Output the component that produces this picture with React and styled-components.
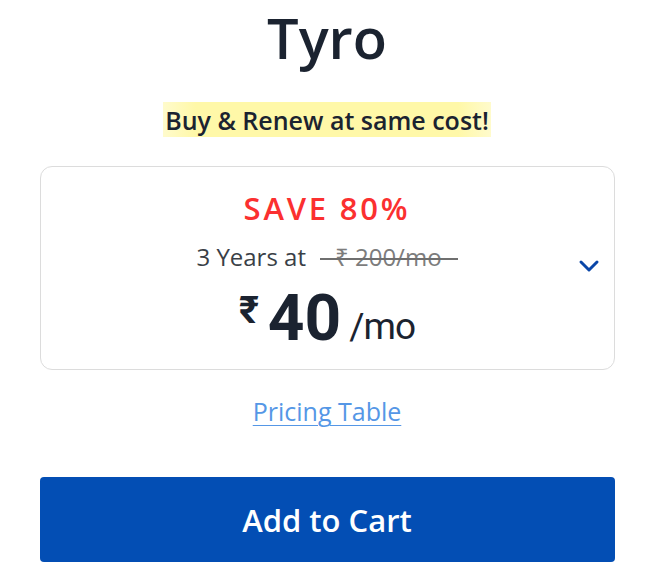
import React from "react";
import styled, { createGlobalStyle } from "styled-components";

const GlobalStyle = createGlobalStyle`
  body {
    margin: 0;
    background: #ffffff;
    font-family: "Open Sans", "Noto Sans", sans-serif;
  }
`;

const Wrapper = styled.div`
  width: 575px;
  margin: 0 auto;
  display: flex;
  flex-direction: column;
  align-items: center;
`;

const Title = styled.h1`
  margin: 0;
  font-size: 56px;
  font-weight: 600;
  line-height: 74px;
  color: #1b2330;
`;

const Highlight = styled.span`
  margin-top: 28px;
  padding: 0 2px;
  height: 35px;
  display: flex;
  align-items: center;
  font-size: 25px;
  font-weight: 600;
  color: #1b2330;
  background: linear-gradient(90deg, #fffbcc 0%, #fff8a8 10%, #fff8a8 90%, #fffbcc 100%);
`;

const Card = styled.div`
  position: relative;
  box-sizing: border-box;
  width: 100%;
  height: 204px;
  margin-top: 29px;
  border: 1px solid #dcdcdc;
  border-radius: 12px;
  display: flex;
  flex-direction: column;
  align-items: center;
  padding-top: 20px;
`;

const Save = styled.div`
  font-size: 31px;
  font-weight: 600;
  letter-spacing: 2.8px;
  line-height: 42px;
  color: #fb3030;
`;

const Term = styled.div`
  margin-top: 12px;
  font-size: 24px;
  line-height: 32px;
  color: #3a3f47;
  display: flex;
  gap: 14px;
`;

const Struck = styled.span`
  position: relative;
  color: #7d7d7d;
  padding: 0 16px 0 15px;
  &::after {
    content: "";
    position: absolute;
    left: 0;
    right: 0;
    top: 54%;
    height: 2px;
    background: #6f6f6f;
  }
`;

const Price = styled.div`
  margin-top: 17px;
  display: flex;
  align-items: flex-end;
  color: #1b2330;
  font-family: Roboto, "Noto Sans", sans-serif;
`;

const Rupee = styled.span`
  font-size: 38px;
  font-weight: 700;
  align-self: flex-start;
  line-height: 40px;
  margin-right: 9px;
`;

const Amount = styled.span`
  font-size: 64px;
  font-weight: 700;
  line-height: 58px;
`;

const Per = styled.span`
  font-size: 37px;
  font-weight: 400;
  letter-spacing: -1px;
  line-height: 42px;
  margin-left: 8px;
`;

const Chevron = styled.span`
  position: absolute;
  right: 14px;
  top: 92px;
  display: flex;
`;

const PricingLink = styled.a`
  margin-top: 24px;
  font-size: 25px;
  color: #5597e6;
  text-decoration: underline;
  text-decoration-thickness: 1px;
  text-underline-offset: 4px;
  line-height: 34px;
`;

const CartButton = styled.button`
  margin-top: 49px;
  width: 100%;
  height: 85px;
  border: none;
  border-radius: 4px;
  background: #034eb4;
  color: #ffffff;
  font-family: "Open Sans", "Noto Sans", sans-serif;
  font-size: 31px;
  font-weight: 600;
`;

export default function App() {
  return (
    <>
      <GlobalStyle />
      <Wrapper>
        <Title>Tyro</Title>
        <Highlight>Buy &amp; Renew at same cost!</Highlight>
        <Card>
          <Save>SAVE 80%</Save>
          <Term>
            3 Years at <Struck>₹ 200/mo</Struck>
          </Term>
          <Price>
            <Rupee>₹</Rupee>
            <Amount>40</Amount>
            <Per>/mo</Per>
          </Price>
          <Chevron>
            <svg width="22" height="14" viewBox="0 0 22 14" fill="none">
              <path d="M3 3 L11 11 L19 3" stroke="#0a46a8" strokeWidth="3" strokeLinecap="round" strokeLinejoin="round" />
            </svg>
          </Chevron>
        </Card>
        <PricingLink href="#">Pricing Table</PricingLink>
        <CartButton>Add to Cart</CartButton>
      </Wrapper>
    </>
  );
}
